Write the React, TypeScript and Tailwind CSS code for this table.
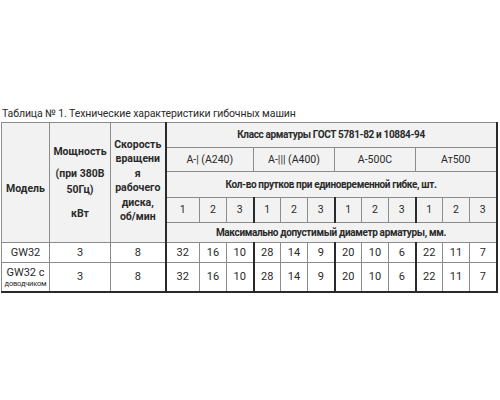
import React from 'react'

const groups = ['А-| (А240)', 'А-||| (А400)', 'А-500С', 'Ат500']
const counts = [1, 2, 3, 1, 2, 3, 1, 2, 3, 1, 2, 3]
const rows = [
  { model: 'GW32', sub: '', power: '3', speed: '8', d: [32, 16, 10, 28, 14, 9, 20, 10, 6, 22, 11, 7] },
  { model: 'GW32 с', sub: 'доводчиком', power: '3', speed: '8', d: [32, 16, 10, 28, 14, 9, 20, 10, 6, 22, 11, 7] },
]

// thick divider before each bar group
const groupStart = (i: number) => i % 3 === 0

const cell = 'border border-[#8c8c8c] text-center align-middle p-0'
const wide = `${cell} border-l-2 border-l-[#2a2a2a] border-r-2 border-r-[#2a2a2a] font-bold text-[10px] tracking-[-0.35px]`

export default function App() {
  return (
    <div className="w-[500px] h-[400px] bg-white pt-[106px] pl-[1px] text-[#2a2a2a] font-['Roboto',sans-serif]">
      <div className="pl-[1px] text-[10.5px] leading-[16px] tracking-[-0.1px]">
        Таблица № 1. Технические характеристики гибочных машин
      </div>
      <table className="border-collapse table-fixed w-[496px] text-[10.5px] leading-[14px]">
        <colgroup>
          <col className="w-[48px]" />
          <col className="w-[61px]" />
          <col className="w-[55px]" />
          <col className="w-[34px]" />
          {counts.slice(1).map((_, i) => (
            <col key={i} className="w-[27px]" />
          ))}
        </colgroup>
        <tbody>
          <tr className="h-[25px] bg-[#f2f2f2]">
            <td rowSpan={6} className={`${cell} font-bold pt-[12px]`}>Модель</td>
            <td rowSpan={6} className={`${cell} font-bold`}>
              <div>Мощность</div>
              <div className="mt-[8px]">(при 380В</div>
              <div className="mt-[2px]">50Гц)</div>
              <div className="mt-[10px]">кВт</div>
            </td>
            <td rowSpan={6} className={`${cell} font-bold leading-[14.5px] pb-[3px]`}>
              <div>Скорость</div>
              <div>вращени</div>
              <div>я</div>
              <div>рабочего</div>
              <div>диска,</div>
              <div>об/мин</div>
            </td>
            <td colSpan={12} className={wide}>
              Класс арматуры ГОСТ 5781-82 и 10884-94
            </td>
          </tr>
          <tr className="h-[24px] bg-[#f2f2f2]">
            {groups.map((g, i) => (
              <td
                key={g}
                colSpan={3}
                className={`${cell} ${i === 0 ? 'border-l-2 border-l-[#2a2a2a]' : ''} ${i === 3 ? 'border-r-2 border-r-[#2a2a2a]' : ''}`}
              >
                {g}
              </td>
            ))}
          </tr>
          <tr className="h-[26px] bg-[#f2f2f2]">
            <td colSpan={12} className={wide}>
              Кол-во прутков при единовременной гибке, шт.
            </td>
          </tr>
          <tr className="h-[25px] bg-[#f2f2f2]">
            {counts.map((c, i) => (
              <td
                key={i}
                className={`${cell} ${groupStart(i) ? 'border-l-2 border-l-[#2a2a2a]' : ''} ${i === 11 ? 'border-r-2 border-r-[#2a2a2a]' : ''}`}
              >
                {c}
              </td>
            ))}
          </tr>
          <tr className="h-[20px] bg-[#f2f2f2]">
            <td colSpan={12} className={wide}>
              Максимально допустимый диаметр арматуры, мм.
            </td>
          </tr>
          <tr className="h-0" />
          {rows.map((r, ri) => {
            const last = ri === 1 ? 'border-b-2 border-b-[#2a2a2a]' : ''
            return (
              <tr key={ri} className={ri === 0 ? 'h-[20px]' : 'h-[29px]'}>
                <td className={`${cell} text-[11px] ${last}`}>
                  <div className="leading-[13px]">{r.model}</div>
                  {r.sub && <div className="text-[7.5px] leading-[9px] tracking-[-0.2px]">{r.sub}</div>}
                </td>
                <td className={`${cell} text-[11px] ${last}`}>{r.power}</td>
                <td className={`${cell} text-[11px] ${last}`}>{r.speed}</td>
                {r.d.map((v, i) => (
                  <td
                    key={i}
                    className={`${cell} text-[11px] ${groupStart(i) ? 'border-l-2 border-l-[#2a2a2a]' : ''} ${i === 11 ? 'border-r-2 border-r-[#2a2a2a]' : ''} ${last}`}
                  >
                    {v}
                  </td>
                ))}
              </tr>
            )
          })}
        </tbody>
      </table>
    </div>
  )
}
